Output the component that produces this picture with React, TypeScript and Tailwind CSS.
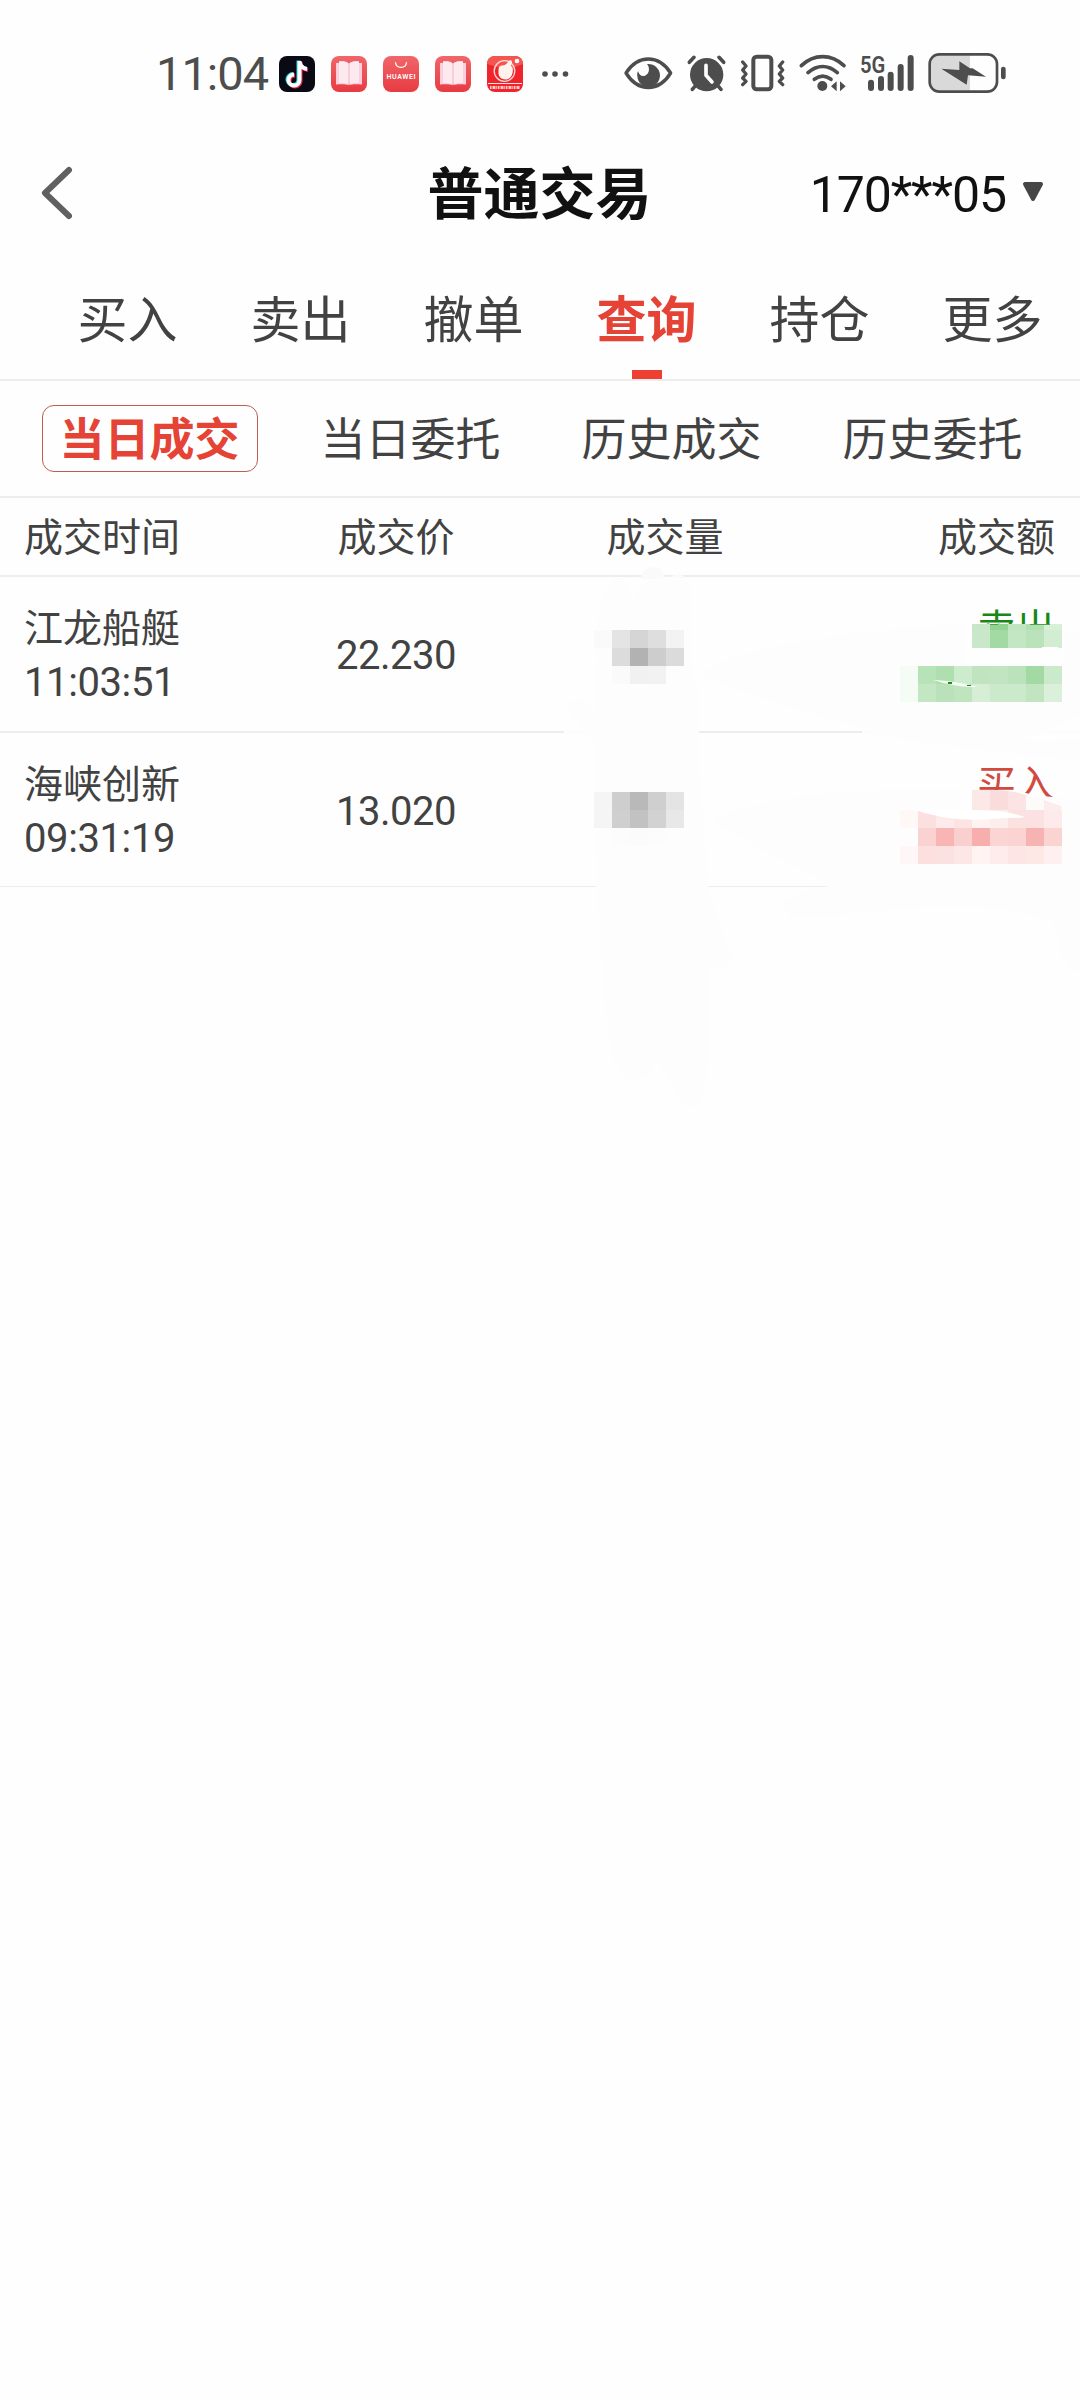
const tabs = ['买入', '卖出', '撤单', '查询', '持仓', '更多'];
const subTabs = ['当日成交', '当日委托', '历史成交', '历史委托'];

const trades = [
  { name: '江龙船艇', time: '11:03:51', price: '22.230', side: '卖出', color: 'text-[#178817]', row: 'h-[156px] border-b-2' },
  { name: '海峡创新', time: '09:31:19', price: '13.020', side: '买入', color: 'text-[#cf4b3f]', row: 'h-[154px] border-b' },
];

// Mosaic cells are 18px squares: [top, height, first column x, colours]
const mosaic: [number, number, number, string[]][] = [
  [630, 18, 594, ['#fafafa', '#e4e4e4', '#d5d5d5', '#dedede', '#f3f3f3']],
  [648, 18, 612, ['#dcdcdc', '#b2b2b2', '#cdcdcd', '#dbdbdb']],
  [666, 18, 612, ['#fafafa', '#f1f1f1', '#f2f2f2', '#fdfdfd']],
  [792, 18, 594, ['#f5f5f5', '#cecece', '#b9b9b9', '#cfcfcf', '#e4e4e4']],
  [810, 18, 594, ['#f5f5f5', '#cfcfcf', '#c2c2c2', '#d2d2d2', '#e8e8e8']],
  [828, 18, 612, ['#fcfcfc', '#fbfbfb', '#fcfcfc', '#fdfdfd']],
  [624, 6, 972, ['#c8e7c8', '#92d392', '#c1e5c1', '#b1dfb1', '#d8f0d8']],
  [630, 18, 972, ['#c9e8c9', '#a3d9a3', '#c3e6c3', '#bbe3bb', '#d3edd3']],
  [666, 18, 900, ['#f5fcf5', '#b8e2b8', '#afdeaf', '#cdebcd', '#bfe4bf', '#c1e5c1', '#bbe3bb', '#a3d9a3', '#cbe9cb']],
  [684, 18, 900, ['#f5fcf5', '#c3e6c3', '#bae2ba', '#bfe5bf', '#d6eed6', '#cbe9cb', '#cbe9cb', '#c1e5c1', '#daf0da']],
  [810, 18, 900, ['#fff8f7', '#fce0e0', '#fdebeb', '#fde3e3', '#fff2f1', '#fdeeee', '#fce1e1', '#fce1e2', '#fdeaea']],
  [828, 18, 900, ['#fdfdfd', '#fad2d1', '#f8b5b3', '#fad0ce', '#f7afad', '#fbd5d3', '#fbd3d3', '#f7b3b1', '#f9d4d1']],
  [846, 18, 900, ['#fff7f7', '#fce0e0', '#fce1e1', '#fce7e6', '#fff4f2', '#fdeceb', '#fce5e4', '#fde8e6', '#fef0f0']],
];

function BookIcon() {
  return (
    <svg className="h-9 w-9" viewBox="0 0 36 36">
      <defs>
        <linearGradient id="book" x1="0" y1="0" x2="0" y2="1">
          <stop offset="0" stopColor="#f0666a" />
          <stop offset="1" stopColor="#e83b42" />
        </linearGradient>
      </defs>
      <rect width="36" height="36" rx="8" fill="url(#book)" />
      <path d="M5 7h3v-1.500c4-.5 7 0 9.500 1.800v22C15 28 11 28 5 28.500z" fill="#fbd0dc" />
      <path d="M31 7h-3v-1.500c-4-.5-7 0-9.500 1.800v22c2.500-1.300 6.500-1.300 12.500-.8z" fill="#fbd0dc" />
      <path d="M8 5.500c4-.5 7 0 9.700 2v21c-2.700-1.600-6-2-9.700-1.500z" fill="#fdeaf1" />
      <path d="M28 5.500c-4-.5-7 0-9.700 2v21c2.700-1.600 6-2 9.700-1.500z" fill="#fdeaf1" />
    </svg>
  );
}

function StatusBar() {
  return (
    <div className="flex h-[147px] items-center pl-[156px] text-[#4d4d4d]">
      <span className="w-[123px] text-[47px] leading-none tracking-[-1px]">11:04</span>
      <div className="flex items-center gap-4">
        <svg className="h-9 w-9" viewBox="0 0 36 36">
          <rect width="36" height="36" rx="8" fill="#0a0a14" />
          <g fill="none" strokeWidth="4">
            <path d="M19.500 4.500v19a5.500 5.500 0 1 1-5.500-5.500M19.500 5c.8 4.500 3.500 7 7.500 7.500" stroke="#25d8d8" />
            <path d="M21.500 6v19a5.500 5.500 0 1 1-5.500-5.500M21.500 6.500c.8 4.500 3.500 7 7.500 7.500" stroke="#f0284f" />
            <path d="M20.500 5v19a5.500 5.500 0 1 1-5.500-5.500M20.500 5.500c.8 4.500 3.500 7 7.500 7.500" stroke="#fff" />
          </g>
        </svg>
        <BookIcon />
        <svg className="h-9 w-9" viewBox="0 0 36 36">
          <rect width="36" height="36" rx="8" fill="url(#book)" />
          <path d="M12.500 6.500c.6 6.400 10.400 6.400 11 0" fill="none" stroke="#fff" strokeWidth="1.200" strokeLinecap="round" />
          <text x="18" y="23" textAnchor="middle" textLength="29" fontSize="7" fontWeight="600" fill="#fff">HUAWEI</text>
        </svg>
        <BookIcon />
        <svg className="h-9 w-9" viewBox="0 0 36 36">
          <rect width="36" height="36" rx="8" fill="#f0242c" />
          <path d="M0 8a8 8 0 0 1 8-8h20a8 8 0 0 1 8 8L20 14z" fill="#f4564f" />
          <circle cx="17.500" cy="15" r="10.300" fill="none" stroke="#fbd9d5" strokeWidth="1.300" />
          <path d="M11.500 14c0-3 1-4.500 4-4.500 3.500-.5 4.500-2 6-4.500 1-1.500 4-1 3.500 1.500l-1 3.500c2.500 1.500 2 5 1.500 7-1 4.500-4 6.500-7 6.500-4 0-7-3-7-6z" fill="#fff3ed" />
          <circle cx="30" cy="5" r="2.300" fill="#fff" />
          <path d="M1 27.500h34" stroke="#fde0dd" strokeWidth="1" />
          <path d="M3 31.500h30" stroke="#fbd0cc" strokeWidth="3" strokeDasharray="1.500 1 3 .8 1 .7" />
        </svg>
      </div>
      <svg className="ml-[18px] h-2 w-7" viewBox="0 0 28 8" fill="currentColor">
        <circle cx="4" cy="4" r="2.800" />
        <circle cx="14" cy="4" r="2.800" />
        <circle cx="24.500" cy="4" r="2.800" />
      </svg>
      {/* eye comfort, alarm, vibrate, wifi, signal and battery */}
      <svg className="ml-[31px] mt-[3px] h-[70px] w-[420px]" viewBox="0 0 1260 210" fill="none" stroke="currentColor" strokeLinecap="round" strokeLinejoin="round">
        <path d="M78 99c36-56 98-56 134 0-36 58-98 58-134 0z" strokeWidth="10" />
        <path d="M141 72c20-2 39 13 39 34 0 19-14 35-34 35-18 0-33-13-34-33-1-7 0-10 2-14 4 12 12 17 21 13 13-5 16-23 6-35z" fill="currentColor" stroke="none" />
        <circle cx="320" cy="104" r="50" fill="currentColor" stroke="none" />
        <path d="M268 67l14-15M371 67l-14-15M284 140l-7 8M356 140l7 8" strokeWidth="11" />
        <path d="M318 76v30l18 20" stroke="#fefefe" strokeWidth="11" />
        <rect x="460" y="50" width="54" height="98" rx="10" strokeWidth="12" />
        <path d="M428 66l10 12-10 12 10 12-10 12 10 10-10 10M548 66l-10 12 10 12-10 12 10 12-10 10 10 10" strokeWidth="10" />
        <path d="M604 77c38-36 90-36 128 0M624 98c28-24 60-24 88 0M643 118c16-12 34-12 50 0" strokeWidth="11" />
        <circle cx="667" cy="138" r="15" fill="currentColor" stroke="none" />
        <path d="M710 124v30l-17-15zM720 124v30l17-15z" fill="currentColor" stroke="none" />
        <path d="M813 128v16M843 117v27M872 104v40M902 81v63M932 54v90" strokeWidth="18" />
        <text x="780" y="98" fontSize="70" fontWeight="600" textLength="76" lengthAdjust="spacingAndGlyphs" fill="currentColor" stroke="none">5G</text>
        <path d="M1110 46h-90a26 26 0 0 0-27 27v52a26 26 0 0 0 27 27h90z" fill="#d9d9d9" stroke="none" />
        <rect x="989" y="43" width="202" height="112" rx="29" strokeWidth="8" />
        <path d="M1078 64l32 21h8l40 25-54-4-4 28-76-48 54 4z" fill="currentColor" stroke="none" />
        <path d="M1210 87v24" strokeWidth="14" />
      </svg>
    </div>
  );
}

function TopBar() {
  return (
    <header className="grid h-[92px] grid-cols-3 items-center pl-[38px] pr-[36px]">
      <svg className="ml-[3px] h-14 w-9" viewBox="0 0 36 56" fill="none" stroke="#606060" strokeWidth="6" strokeLinecap="round" strokeLinejoin="round">
        <path d="M28 5L4 28l24 23" />
      </svg>
      <h1 className="-ml-[3px] justify-self-center pt-1 text-[56px] font-bold leading-none text-[#111]">普通交易</h1>
      <div className="flex items-center gap-[16px] justify-self-end text-[#111]">
        <span className="pt-[3px] text-[50px] leading-none tracking-[-1.1px]">170***05</span>
        <svg className="-mt-[2px] h-[22px] w-[22px]" viewBox="0 0 22 22">
          <path d="M3 3h16l-8 15z" fill="#464646" stroke="#464646" strokeWidth="4" strokeLinejoin="round" />
        </svg>
      </div>
    </header>
  );
}

function MosaicOverlay() {
  return (
    <svg className="pointer-events-none absolute left-0 top-0 h-[1200px] w-[1080px]" viewBox="0 0 1080 1200">
      {/* faint brush strokes, and the gaps they leave in the dividers */}
      <path d="M641 579c0-16 24-16 24 0zM670 578c4-5 12-5 16 0z" fill="#fafafa" />
      <path d="M597 640c0-30 10-60 20-62s16 20 16 22c5-24 55-34 58-8v75l8 30v70l9 110 2 130c0 60-6 100-16 100-18 0-22-30-38-45-20 30-40 20-46-20-12-90-16-200-14-300l-25-28c-8-10 6-20 14-12l10 12z" fill="#fdfdfd" />
      <path d="M690 840l17 50 25 68c-8 18-22 8-30-8l-20-60z" fill="#fdfdfd" />
      <path d="M700 675c30-30 180-48 273-51l107 10v80c-80 60-260 10-380-39z" fill="#fdfdfd" />
      <path d="M862 730c100 10 160 12 218 10v20c-80-5-150-18-218-26z" fill="#fdfdfd" />
      <path d="M712 820c60-30 200-40 368-20v170c-20 10-20-40-30-50-100-30-180-2-260-2-20-20 10-26 40-32-30-20-60-28-118-66z" fill="#fdfdfd" />
      <path d="M564 730h135v4H564zM866 730h214v4H880zM596 884h88v5h-88zM685 884h22v5h-22zM828 884h90v5h-90zM934 884h146v5H934z" fill="#fdfdfd" />
      {/* hides the lower part of both side labels */}
      <path d="M964 624h100v40H964zM960 790h48c16 1 40 8 53 16v30H960z" fill="#fefefe" />
      <g shapeRendering="crispEdges">
        {mosaic.map(([y, height, x, cells]) =>
          cells.map((fill, i) => <rect key={`${x + i * 18}-${y}`} x={x + i * 18} y={y} width="18" height={height} fill={fill} />)
        )}
      </g>
      <path d="M972 790h18v20h-18z" fill="#fde8e8" />
      <path d="M990 790c6 0 12 0 18 1v19h-18z" fill="#fbdcdc" />
      <path d="M1008 791c7 1 12 2 18 4v15h-18z" fill="#fce3e4" />
      <path d="M1026 795l18 5v10h-18z" fill="#fdfafa" />
      <path d="M1044 800l17 6v4h-17z" fill="#fdecec" />
      <path d="M990 624h8v1h-8zM1030 624h20v1h-20z" fill="#4aa54a" />
      <path d="M933 680c14 0 35 4 45 7-14 1-32-3-45-7z" fill="#f4fbf4" />
      <path d="M948 682h4v2h-4zM967 685h4v1h-4z" fill="#228a22" />
      <path d="M1042 647h16v4h-16z" fill="#fefefe" />
      <path d="M912 810c30-1 70 0 85 1 12 1 22 4 28 6-10 2-20 0-35 2-25 2-45 0-72-8z" fill="#fff" />
    </svg>
  );
}

export default function App() {
  return (
    <div className="relative min-h-[2400px] w-[1080px] overflow-hidden bg-[#fefefe] font-[Roboto,'Noto_Sans_CJK_SC',sans-serif] text-[#424242]">
      <StatusBar />
      <TopBar />

      <nav className="mt-[21px] flex h-[121px] border-b-2 border-[#ededed] pl-[41px]">
        {tabs.map((tab) => (
          <div key={tab} className="flex w-[173px] flex-col items-center justify-between">
            <span className={tab === '查询' ? 'h-[119px] text-[50px] font-bold leading-[123px] text-[#e54336]' : 'h-[119px] text-[50px] leading-[123px]'}>
              {tab}
            </span>
            {tab === '查询' && <i className="-mt-[9px] h-[9px] w-[30px] shrink-0 bg-[#ee4032]" />}
          </div>
        ))}
      </nav>

      <div className="flex h-[117px] items-center border-b-2 border-[#ededed] pl-[19px] text-[45px]">
        {subTabs.map((tab, i) => (
          <div key={tab} className="flex w-[261px] justify-center">
            {i === 0 ? (
              <span className="h-[67px] w-[216px] rounded-xl border border-[#bd5c52] text-center font-bold leading-[69px] text-[#e54336]">
                {tab}
              </span>
            ) : (
              <span className="h-[67px] leading-[71px]">{tab}</span>
            )}
          </div>
        ))}
      </div>

      {/* Trade table */}
      <div className="grid h-[79px] grid-cols-[270px_252px_286px_1fr] items-center border-b-2 border-[#ededed] pt-1 text-[39px]">
        <span className="pl-6">成交时间</span>
        <span className="text-center">成交价</span>
        <span className="text-center">成交量</span>
        <span className="pr-[25px] text-right">成交额</span>
      </div>
      {trades.map((trade) => (
        <div key={trade.time} className={`grid grid-cols-[270px_252px_286px_1fr] items-center border-[#ededed] pt-1 text-[39px] leading-[54px] ${trade.row}`}>
          <div className="flex flex-col pl-6">
            <span>{trade.name}</span>
            <span className="text-[40px] tracking-[-0.4px]">{trade.time}</span>
          </div>
          <span className="text-center text-[40px] tracking-[-0.5px]">{trade.price}</span>
          <span />
          <span className={`h-[108px] pr-[25px] text-right ${trade.color}`}>{trade.side}</span>
        </div>
      ))}
      <MosaicOverlay />
    </div>
  );
}
